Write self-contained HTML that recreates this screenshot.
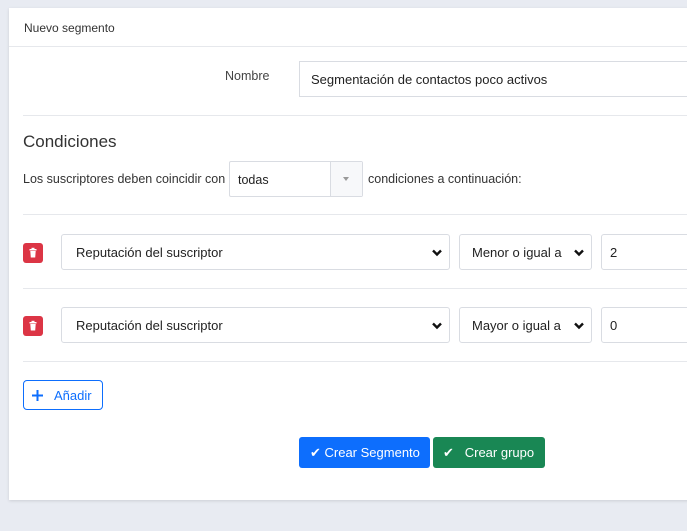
<!DOCTYPE html>
<html><head><meta charset="utf-8"><style>
*{box-sizing:border-box;margin:0;padding:0}
body{width:687px;height:531px;background:#e8ebf2;font-family:"Liberation Sans",sans-serif;color:#333;font-size:13px;position:relative;overflow:hidden}
.card{position:absolute;left:9px;top:8px;width:690px;height:492px;background:#fff;box-shadow:0 1px 3px rgba(0,0,0,.12)}
.a{position:absolute}
.hr{position:absolute;height:1px;background:#e6e8ec}
.inp{position:absolute;border:1px solid #d9dce2;background:#fff;font-size:13px;color:#222}
.sel{position:absolute;border:1px solid #d9dce2;border-radius:3px;background:#fff;font-size:13px;color:#222}
.chev{position:absolute;right:6px;top:13px}
.trash{position:absolute;width:20px;height:20px;background:#dc3545;border-radius:3px}
.btn{position:absolute;border-radius:3px;color:#fff;font-size:13px;height:31px;line-height:31px}
</style></head><body>
<div class="card">
  <div class="a" style="left:15px;top:13px;font-size:12px;color:#333">Nuevo segmento</div>
  <div class="hr" style="left:0;top:38px;width:690px"></div>
  <div class="a" style="left:216px;top:61px;font-size:12.5px;color:#444">Nombre</div>
  <div class="inp" style="left:290px;top:53px;width:400px;height:36px;padding:10px 11px">Segmentación de contactos poco activos</div>
  <div class="hr" style="left:14px;top:107px;width:676px"></div>
  <div class="a" style="left:14px;top:124px;font-size:17px;color:#333">Condiciones</div>
  <div class="a" style="left:14px;top:164px;font-size:12.5px;color:#333">Los suscriptores deben coincidir con</div>
  <div class="inp" style="left:220px;top:153px;width:134px;height:36px;border-radius:2px">
    <div class="a" style="left:8px;top:11px;font-size:12.5px">todas</div>
    <div class="a" style="left:100px;top:0;width:32px;height:34px;border-left:1px solid #d9dce2;background:#f7f8fa"></div>
    <div class="a" style="left:113px;top:15px;width:0;height:0;border-left:3px solid transparent;border-right:3px solid transparent;border-top:4px solid #999"></div>
  </div>
  <div class="a" style="left:359px;top:164px;font-size:12.5px;color:#333">condiciones a continuación:</div>
  <div class="hr" style="left:14px;top:206px;width:676px"></div>

  <div class="trash" style="left:14px;top:235px"><svg width="20" height="20" viewBox="0 0 20 20"><rect x="6.5" y="6" width="7" height="1.5" fill="#fff"/><rect x="8.5" y="4.8" width="3" height="1.3" fill="#fff"/><path d="M7.3 8h5.4l-.5 6.5h-4.4z" fill="#fff"/></svg></div>
  <div class="sel" style="left:52px;top:226px;width:389px;height:36px;padding:10px 14px">Reputación del suscriptor<svg class="chev" width="12" height="9" viewBox="0 0 12 9"><path d="M2 2.5l4 4 4-4" stroke="#111" stroke-width="2.4" fill="none"/></svg></div>
  <div class="sel" style="left:450px;top:226px;width:133px;height:36px;padding:10px 12px">Menor o igual a<svg class="chev" width="12" height="9" viewBox="0 0 12 9"><path d="M2 2.5l4 4 4-4" stroke="#111" stroke-width="2.4" fill="none"/></svg></div>
  <div class="sel" style="left:592px;top:226px;width:110px;height:36px;padding:10px 8px">2</div>
  <div class="hr" style="left:14px;top:280px;width:676px"></div>

  <div class="trash" style="left:14px;top:308px"><svg width="20" height="20" viewBox="0 0 20 20"><rect x="6.5" y="6" width="7" height="1.5" fill="#fff"/><rect x="8.5" y="4.8" width="3" height="1.3" fill="#fff"/><path d="M7.3 8h5.4l-.5 6.5h-4.4z" fill="#fff"/></svg></div>
  <div class="sel" style="left:52px;top:299px;width:389px;height:36px;padding:10px 14px">Reputación del suscriptor<svg class="chev" width="12" height="9" viewBox="0 0 12 9"><path d="M2 2.5l4 4 4-4" stroke="#111" stroke-width="2.4" fill="none"/></svg></div>
  <div class="sel" style="left:450px;top:299px;width:133px;height:36px;padding:10px 12px">Mayor o igual a<svg class="chev" width="12" height="9" viewBox="0 0 12 9"><path d="M2 2.5l4 4 4-4" stroke="#111" stroke-width="2.4" fill="none"/></svg></div>
  <div class="sel" style="left:592px;top:299px;width:110px;height:36px;padding:10px 8px">0</div>
  <div class="hr" style="left:14px;top:353px;width:676px"></div>

  <div class="a" style="left:14px;top:372px;width:80px;height:30px;border:1px solid #0d6efd;border-radius:4px;color:#0d6efd;font-size:13px">
    <svg class="a" style="left:8px;top:9px" width="11" height="11" viewBox="0 0 11 11"><path d="M5.5 0v11M0 5.5h11" stroke="#0d6efd" stroke-width="2"/></svg>
    <span class="a" style="left:30px;top:7px">Añadir</span>
  </div>

  <div class="btn" style="left:290px;top:429px;width:131px;background:#0d6efd;padding-left:11px">✔ Crear Segmento</div>
  <div class="btn" style="left:424px;top:429px;width:112px;background:#198754;padding-left:10px">✔&nbsp;&nbsp;&nbsp;Crear grupo</div>
</div>
</body></html>
